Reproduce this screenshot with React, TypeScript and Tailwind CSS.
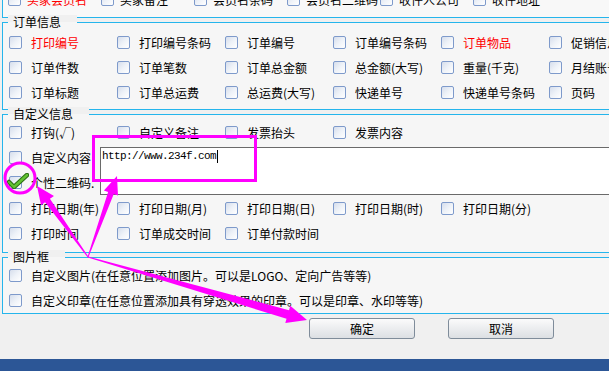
import React from 'react';

type Cell = { label: string; red?: boolean; checked?: boolean };

const topRow: Cell[] = [
  { label: '买家会员名', red: true },
  { label: '买家备注' },
  { label: '会员名条码' },
  { label: '会员名二维码' },
  { label: '收件人公司' },
  { label: '收件地址' },
];

const orderRows: Cell[][] = [
  [
    { label: '打印编号', red: true },
    { label: '打印编号条码' },
    { label: '订单编号' },
    { label: '订单编号条码' },
    { label: '订单物品', red: true },
    { label: '促销信息' },
  ],
  [
    { label: '订单件数' },
    { label: '订单笔数' },
    { label: '订单总金额' },
    { label: '总金额(大写)' },
    { label: '重量(千克)' },
    { label: '月结账号' },
  ],
  [
    { label: '订单标题' },
    { label: '订单总运费' },
    { label: '总运费(大写)' },
    { label: '快递单号' },
    { label: '快递单号条码' },
    { label: '页码' },
  ],
];

const dateRow: Cell[] = [
  { label: '打印日期(年)' },
  { label: '打印日期(月)' },
  { label: '打印日期(日)' },
  { label: '打印日期(时)' },
  { label: '打印日期(分)' },
];

const timeRow: Cell[] = [{ label: '打印时间' }, { label: '订单成交时间' }, { label: '订单付款时间' }];

function Box({ checked }: { checked?: boolean }) {
  return (
    <span className="relative inline-block h-[13px] w-[13px] shrink-0 rounded-[2px] border border-[#7e9acb] bg-linear-to-br from-[#d6deec] via-[#eef2f8] to-white">
      {checked && (
        <svg className="absolute left-[-3px] top-[-4px]" width="22" height="16" viewBox="0 0 22 16">
          <polyline points="2,9 7,14 20,2" fill="none" stroke="#2b6f14" strokeWidth="4.5" strokeLinecap="round" strokeLinejoin="round" />
          <polyline points="2,9 7,14 20,2" fill="none" stroke="#62c232" strokeWidth="2.4" strokeLinecap="round" strokeLinejoin="round" />
        </svg>
      )}
    </span>
  );
}

function Item({ label, red, checked, gap = 'gap-[9px]' }: Cell & { gap?: string }) {
  return (
    <div className={`flex h-[25px] items-center whitespace-nowrap ${gap}`}>
      <Box checked={checked} />
      <span className={red ? 'text-[#ff0000]' : 'text-black'}>{label}</span>
    </div>
  );
}

function Row({ cells }: { cells: Cell[] }) {
  return (
    <div className="grid grid-cols-[repeat(6,108px)]">
      {cells.map((c) => (
        <Item key={c.label} {...c} />
      ))}
    </div>
  );
}

function Group({ title, className, children }: { title: string; className: string; children: React.ReactNode }) {
  return (
    <div className={`relative ml-[2px] w-[680px] border border-[#25b5ec] bg-[#f6f6f6] pl-[6px] ${className}`}>
      <span className="absolute left-[5px] top-[-8px] bg-linear-to-b from-[#f0f0f0] from-50% to-[#f6f6f6] to-50% pl-[5px] pr-[16px] leading-[14px]">
        {title}
      </span>
      {children}
    </div>
  );
}

function arrow(x1: number, y1: number, x2: number, y2: number, headLen: number, headW: number, w0: number, w1: number) {
  const len = Math.hypot(x2 - x1, y2 - y1);
  const dx = (x2 - x1) / len;
  const dy = (y2 - y1) / len;
  const nx = -dy;
  const ny = dx;
  const bx = x2 - dx * headLen;
  const by = y2 - dy * headLen;
  const p = (x: number, y: number, w: number) => `${x + nx * w},${y + ny * w}`;
  return [
    p(x1, y1, w0 / 2),
    p(bx, by, w1 / 2),
    p(bx, by, headW / 2),
    `${x2},${y2}`,
    p(bx, by, -headW / 2),
    p(bx, by, -w1 / 2),
    p(x1, y1, -w0 / 2),
  ].join(' ');
}

export default function App() {
  return (
    <div className="relative flex h-[371px] w-[609px] flex-col overflow-hidden bg-[#f0f0f0] font-['Noto_Sans_CJK_SC','Noto_Sans',sans-serif] text-[12px] leading-[14px] text-black">
      {/* 上一组（只露出底边） */}
      <div className="ml-[2px] h-[18px] w-[680px] shrink-0 overflow-hidden border-x border-b border-[#25b5ec] bg-[#f8f8f8] pl-[5px]">
        <div className="-mt-[13px] grid grid-cols-[repeat(7,93px)]">
          {topRow.map((c) => (
            <Item key={c.label} {...c} gap="gap-[6px]" />
          ))}
        </div>
      </div>

      {/* 订单信息 */}
      <Group title="订单信息" className="mt-[4px] shrink-0 pb-[4px] pt-[7px]">
        {orderRows.map((r, i) => (
          <Row key={i} cells={r} />
        ))}
      </Group>

      {/* 自定义信息 */}
      <Group title="自定义信息" className="mt-[4px] shrink-0 pb-[6px] pt-[5px]">
        <Row
          cells={[{ label: '打钩(√)' }, { label: '自定义备注' }, { label: '发票抬头' }, { label: '发票内容' }]}
        />
        <div className="flex">
          <div className="w-[91px] shrink-0">
            <Item label="自定义内容" />
            <Item label="个性二维码." checked />
          </div>
          <div className="mt-[2px] h-[48px] flex-1 border border-[#6a6a6a] bg-white pl-[1px] pt-[2px]">
            <span className="flex items-center font-['Liberation_Mono',monospace] text-[11px] leading-[13px] tracking-[-0.6px]">
              http://www.234f.com
              <span className="ml-[1px] inline-block h-[13px] w-px bg-black" />
            </span>
          </div>
        </div>
        <div className="mt-[1px]">
          <Row cells={dateRow} />
          <Row cells={timeRow} />
        </div>
      </Group>

      {/* 图片框 */}
      <Group title="图片框" className="mt-[4px] shrink-0 pt-[5px]">
        <Item label="自定义图片(在任意位置添加图片。可以是LOGO、定向广告等等)" />
        <Item label="自定义印章(在任意位置添加具有穿透效果的印章。可以是印章、水印等等)" />
      </Group>

      {/* 按钮 */}
      <div className="mt-[4px] flex gap-[33px] pl-[309px]">
        <button className="h-[21px] w-[106px] rounded-[3px] border border-[#7f8c9a] bg-linear-to-b from-[#fbfbfb] to-[#dcdfe3] leading-[19px]">
          确定
        </button>
        <button className="h-[21px] w-[106px] rounded-[3px] border border-[#7f8c9a] bg-linear-to-b from-[#fbfbfb] to-[#dcdfe3] leading-[19px]">
          取消
        </button>
      </div>

      <div className="mt-auto h-[12px] shrink-0 bg-[#2c5696]" />

      {/* 标注 */}
      <svg className="pointer-events-none absolute inset-0" width="609" height="371" viewBox="0 0 609 371">
        <rect x="93.5" y="136.5" width="162" height="44" fill="none" stroke="#ff00ff" strokeWidth="3" />
        <circle cx="20" cy="178" r="15" fill="none" stroke="#ff00ff" strokeWidth="3" />
        <polygon points={arrow(88, 257, 37, 186, 18, 16, 1, 6)} fill="#ff00ff" />
        <polygon points={arrow(88, 257, 117, 176, 18, 15, 1, 6)} fill="#ff00ff" />
        <polygon points={arrow(88, 257, 307, 320, 20, 18, 1, 9)} fill="#ff00ff" />
      </svg>
    </div>
  );
}
